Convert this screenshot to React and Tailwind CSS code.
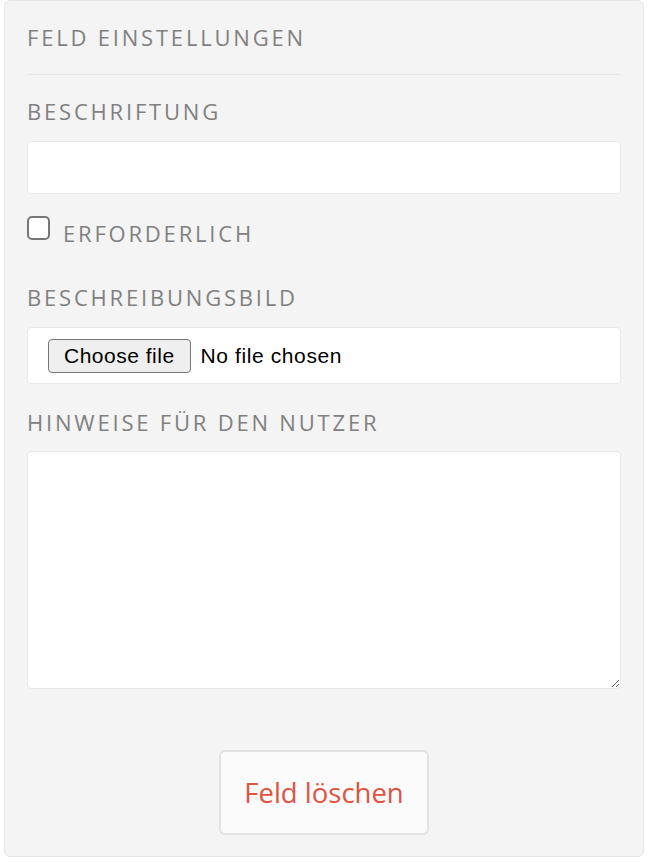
export default function App() {
  const label = "text-[22px] leading-[30px] tracking-[2.8px] text-[#808080] uppercase";

  return (
    <div className="pl-[4px] pr-[8px] bg-white min-h-screen" style={{ fontFamily: '"Open Sans", sans-serif' }}>
      <div className="w-[640px] bg-[#f4f4f4] border border-[#e6e6e6] rounded-[6px] px-[22px] pt-[21px] pb-[21px] flex flex-col">
        <h2 className={label}>Feld Einstellungen</h2>
        <div className="mt-[22px] h-px bg-[#e6e6e6]" />

        <label className={`${label} mt-[21px]`}>Beschriftung</label>
        <input type="text" className="mt-[15px] h-[53px] bg-white border border-[#e9e9e9] rounded-[4px] px-3 outline-none" />

        <label className="mt-[24px] flex items-start gap-[13px] cursor-pointer">
          <span className="mt-[-2px] w-[23px] h-[24px] border-[2px] border-[#767676] rounded-[5px] bg-white shrink-0" />
          <span className={label}>Erforderlich</span>
        </label>

        <label className={`${label} mt-[34px]`}>Beschreibungsbild</label>
        <div className="mt-[15px] h-[57px] bg-white border border-[#e9e9e9] rounded-[4px] flex items-center pl-[20px] gap-[10px]" style={{ fontFamily: '"Liberation Sans", Arial, sans-serif' }}>
          <button className="h-[34px] px-[15px] bg-[#efefef] border border-[#767676] rounded-[4px] text-[21px] tracking-[0.5px] text-black leading-none">
            Choose file
          </button>
          <span className="text-[21px] tracking-[0.6px] text-black">No file chosen</span>
        </div>

        <label className={`${label} mt-[23px]`}>Hinweise für den Nutzer</label>
        <textarea className="mt-[14px] h-[238px] bg-white border border-[#e9e9e9] rounded-[4px] p-3 outline-none" />

        <div className="mt-[61px] flex justify-center">
          <button className="w-[210px] h-[85px] bg-[#fbfbfb] border-[2px] border-[#e2e2e2] rounded-[6px] text-[27.5px] text-[#e0533f]">
            Feld löschen
          </button>
        </div>
      </div>
    </div>
  );
}
